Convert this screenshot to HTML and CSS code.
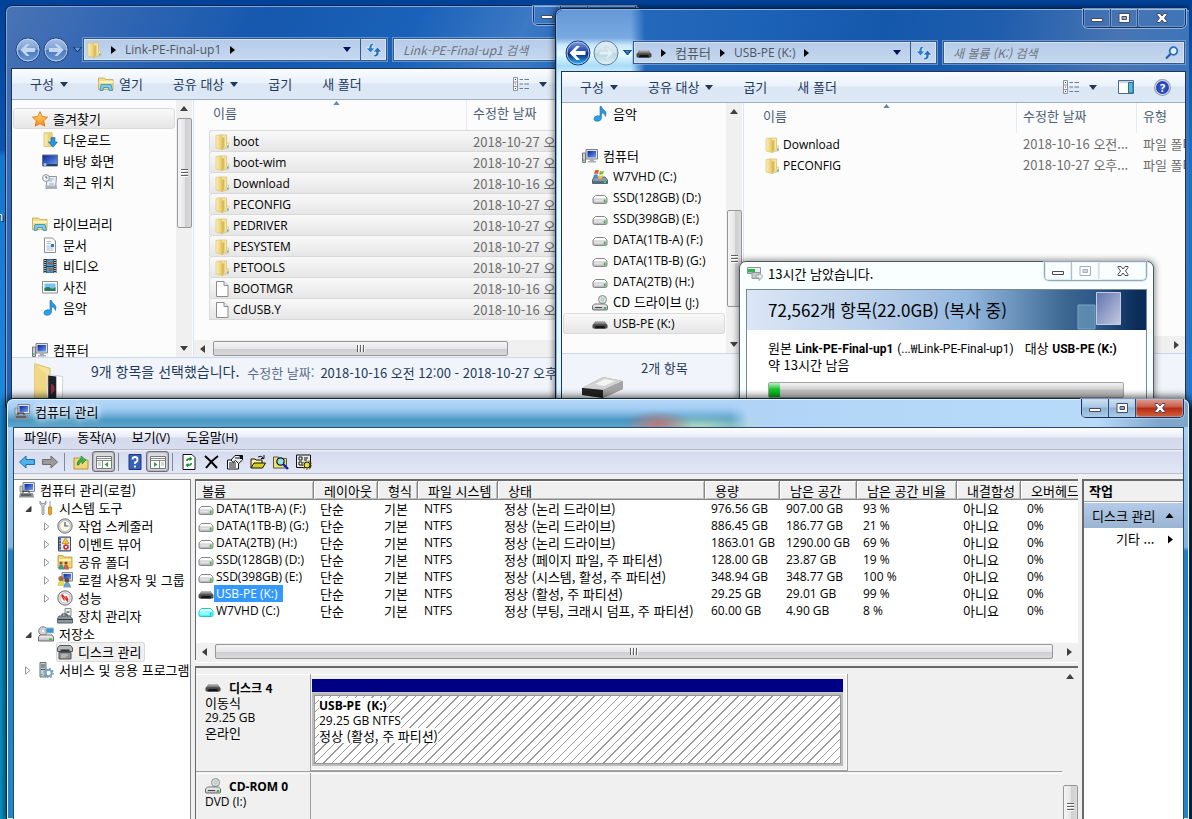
FILE: index.html
```html
<!DOCTYPE html>
<html lang="ko">
<head>
<meta charset="utf-8">
<title>컴퓨터 관리</title>
<link rel="stylesheet" href="styles.css">
</head>
<body>
<svg class="sprite" aria-hidden="true">
  <defs>
    <linearGradient id="gFolder" x1="0" x2="1"><stop offset="0" stop-color="#fbf1ba"/><stop offset="1" stop-color="#e6c766"/></linearGradient>
    <linearGradient id="gMetal" x1="0" y1="0" x2="0" y2="1"><stop offset="0" stop-color="#fafafa"/><stop offset="1" stop-color="#b4b4b8"/></linearGradient>
    <linearGradient id="gUsb" x1="0" y1="0" x2="0" y2="1"><stop offset="0" stop-color="#c4c4c4"/><stop offset="1" stop-color="#5c5c5c"/></linearGradient>
    <linearGradient id="gBlue" x1="0" y1="0" x2="1" y2="1"><stop offset="0" stop-color="#0b1f9a"/><stop offset="1" stop-color="#6ea4f2"/></linearGradient>
    <linearGradient id="gStar" x1="0" y1="0" x2="0" y2="1"><stop offset="0" stop-color="#ffe27a"/><stop offset="1" stop-color="#f58a12"/></linearGradient>
    <linearGradient id="gNote" x1="0" y1="0" x2="0" y2="1"><stop offset="0" stop-color="#2f8fe0"/><stop offset="1" stop-color="#23a7ea"/></linearGradient>
    <linearGradient id="gBall" x1="0" y1="0" x2="0" y2="1"><stop offset="0" stop-color="#7f9fe0"/><stop offset=".48" stop-color="#1f3f9f"/><stop offset=".52" stop-color="#0c2478"/><stop offset="1" stop-color="#28c0ff"/></linearGradient>
    <linearGradient id="gBallDim" x1="0" y1="0" x2="0" y2="1"><stop offset="0" stop-color="#a9c1e6"/><stop offset=".5" stop-color="#7b9fd3"/><stop offset=".52" stop-color="#4a79bf"/><stop offset="1" stop-color="#6d9bd6"/></linearGradient>
    <linearGradient id="gBallOff" x1="0" y1="0" x2="0" y2="1"><stop offset="0" stop-color="#dfeef5"/><stop offset=".5" stop-color="#d0e4ee"/><stop offset=".52" stop-color="#b8d5e4"/><stop offset="1" stop-color="#dcf1f4"/></linearGradient>
  </defs>
  <symbol id="folder" viewBox="0 0 16 16"><path d="M7 1h5.500v13L8 15.500z" fill="#f6e8a6" stroke="#d2b252" stroke-width=".6"/><path d="M8 4l2.500-1.500v11L8 15.500z" fill="#dcbb55"/><path d="M2 1.500 6.500.8 8 3v12.500L2 14z" fill="url(#gFolder)" stroke="#dcc168" stroke-width=".6"/><path d="M12.500 9H14.500v5H12z" fill="#f6f1cf" stroke="#c9b25a" stroke-width=".5"/><path d="M13 11.500h1.500v2H13z" fill="#4bb0e8"/></symbol>
  <symbol id="file" viewBox="0 0 16 16"><path d="M2.500.5h7.500l4 4v11H2.500z" fill="#fff" stroke="#8c8c8c"/><path d="M10 .5v4h4" fill="#eee" stroke="#8c8c8c"/></symbol>
  <symbol id="drive" viewBox="0 0 16 16"><path d="M3.500 5.500h9l2.500 2.500v4q0 1.500-1.500 1.500h-11Q1 13.500 1 12V8z" fill="url(#gMetal)" stroke="#85858a"/><path d="M3.500 6h9l2 2h-13z" fill="#fff"/><path d="M2.500 10h8v1.500h-8z" fill="#e4e4ea"/><path d="M12 9.500h1.500v3H12z" fill="#2fbf32"/></symbol>
  <symbol id="usb" viewBox="0 0 16 16"><path d="M4 5h8l3.500 4v2.500q0 1-1.500 1H2q-1.500 0-1.500-1V9z" fill="#4a4a4a"/><path d="M4 5h8l3 3.800Q8 7.500 1 8.800z" fill="url(#gUsb)"/><path d="M2.500 12.500 4 10h8l1.500 2.500z" fill="#141414"/></symbol>
  <symbol id="cd" viewBox="0 0 16 16"><circle cx="10.500" cy="4.500" r="4" fill="#dde8ee" stroke="#888"/><circle cx="10.500" cy="4.500" r="1.300" fill="#fff" stroke="#999"/><path d="M9 2l2 6M12.500 2l-2 5" stroke="#b9d7b5"/><path d="M2.500 9h11l2 2v3q0 1-1 1H1.500q-1 0-1-1v-3z" fill="url(#gMetal)" stroke="#6f6f72"/><path d="M3 12.500h7" stroke="#444"/><path d="M12 12h2v2h-2z" fill="#2fbf32"/></symbol>
  <symbol id="windrive" viewBox="0 0 16 16"><path d="M2 8h11l2.500 3v3.500H.5V11z" fill="#8b9aa8" stroke="#58646e"/><path d="M1 12h14v2.500H1z" fill="#54707f"/><path d="M12 12.500h2v1.500h-2z" fill="#4be05a"/><path d="M3 1.500q2-1.500 4 0L6 5Q4 3.800 2 5z" fill="#e8572b"/><path d="M8 2q2 1 4-.5L11 5q-2 1.300-4 .5z" fill="#7cbc3b"/><path d="M2 5.800Q4 4.500 6 5.800L5 9Q3 7.800 1 9z" fill="#3a8fe0"/><path d="M7 6.300q2 .9 4-.5L10 9.200q-2 1-4 .3z" fill="#f6c52e"/></symbol>
  <symbol id="star" viewBox="0 0 16 16"><path d="M8 .7l2.300 4.800 5.200.7-3.800 3.600 1 5.300L8 12.600l-4.700 2.500 1-5.300L.5 6.200l5.200-.7z" fill="url(#gStar)" stroke="#e0701c" stroke-width=".9"/></symbol>
  <symbol id="download" viewBox="0 0 16 16"><path d="M2 .8h8v13.500l-8 .2z" fill="url(#gFolder)" stroke="#c9a63e" stroke-width=".6"/><path d="M6 1.500h5v12H6z" fill="#ecd27a"/><path d="M9 5.500h4V10h2.500L11 15.300 6.500 10H9z" fill="#2797dd" stroke="#12609e" stroke-width=".6"/></symbol>
  <symbol id="desktop" viewBox="0 0 16 16"><path d="M.5 2h15v11H.5z" fill="url(#gBlue)" stroke="#68768a"/><path d="M1 11h14v2H1z" fill="#25415f"/><circle cx="3" cy="11.500" r="1.600" fill="#8fd0f2"/></symbol>
  <symbol id="recent" viewBox="0 0 16 16"><path d="M5 2.500h9.500l-1 12H4z" fill="#eef2f5" stroke="#8d959c"/><path d="M7 5h5M7 7h3M7 10h5" stroke="#83a9cc"/><path d="M5 11.500h10v3.500H5z" fill="#aab1b7"/><circle cx="4" cy="4" r="3.400" fill="#f5f8fa" stroke="#8a949c"/><path d="M4 2v2h1.500" stroke="#567" fill="none"/></symbol>
  <symbol id="library" viewBox="0 0 16 16"><path d="M.5 2h6l1 1.500H15V13.500H.5z" fill="#f2de8c" stroke="#c9a63e" stroke-width=".8"/><path d="M1 5h14v2H1z" fill="#fbf2c4"/><path d="M2 14.500 3 8.500h10l1.500 6h-3.500l-.5-3h-5l-.5 3z" fill="#7fcbe8" stroke="#2b8db5" stroke-width=".8"/></symbol>
  <symbol id="doc" viewBox="0 0 16 16"><path d="M2.500 1h8l3 3v11.500h-11z" fill="#fff" stroke="#8a8f96"/><path d="M4.500 4.500H9M4.500 6.500h4M4.500 9H9M4.500 11h7M4.500 13h7" stroke="#a7b7ca"/><path d="M9 7h3v3H9z" fill="#2d79c4"/></symbol>
  <symbol id="video" viewBox="0 0 16 16"><path d="M1.500 1h13v14h-13z" fill="#2b2b2b"/><path d="M4.500 1.500h7V8h-7zM4.500 8.700h7v6h-7z" fill="#3f9fd2"/><path d="M5 2l3 3 3-2-1 4-4-1zM6 10l5 1-3 3z" fill="#b5532e"/><path d="M3 2v13M13 2v13" stroke="#fff" stroke-width="1.300" stroke-dasharray="1 1"/></symbol>
  <symbol id="photo" viewBox="0 0 16 16"><path d="M.5 2.500h15v11.500H.5z" fill="#fff" stroke="#8c8c8c"/><path d="M2.500 4.500h11V12h-11z" fill="#7ac3ea"/><path d="M2.500 9q4-2 6 0t5-1v4h-11z" fill="#2b7a5e"/></symbol>
  <symbol id="music" viewBox="0 0 16 16"><path d="M8 .5h1.500q.5 2.500 3 4t1 6q-.3-3-4-3.700V12q-.3 3-4 3.300-3.500 0-3.700-2.300.2-3 4-3.300l2.200.3z" fill="url(#gNote)" stroke="#1b6fae" stroke-width=".6"/></symbol>
  <symbol id="computer" viewBox="0 0 16 16"><path d="M.5 5h3v9.500h-3z" fill="#c9ced4" stroke="#777"/><path d="M1 11.500h1.500v1.500H1z" fill="#3bc14a"/><path d="M4 1.500h11.500v9.500H4z" fill="#dfe2e6" stroke="#7d8188"/><path d="M5.500 3h8.500v6.500H5.500z" fill="url(#gBlue)"/><path d="M8 11h4v2h2v1.500H6V13h2z" fill="#a9aeb5"/></symbol>
  <symbol id="manage" viewBox="0 0 16 16"><path d="M4 .5h11.500v9H4z" fill="#dfe2e6" stroke="#7d8188"/><path d="M5.500 2h8.500v6H5.500z" fill="url(#gBlue)"/><path d="M1 4h2.500v6H1z" fill="#c9ced4" stroke="#777" stroke-width=".7"/><path d="M1 11h13l1 4.500H0z" fill="#8b9097"/><path d="M4 11V9h6v2M2 13h10" stroke="#333" fill="none"/></symbol>
  <symbol id="copy" viewBox="0 0 16 16"><path d="M.5 1.500h13v6H.5z" fill="#e9eef0" stroke="#8c969a"/><path d="M1 3h7v3.500H1z" fill="#2fb34c"/><path d="M5 6.500h8v6H5z" fill="#c7ced2" stroke="#8c969a"/><path d="M9 9h3V6.500l4 4-4 4V12H9z" fill="#e6e8e9" stroke="#9a9fa3"/></symbol>
  <symbol id="tools" viewBox="0 0 16 16"><path d="M2 1v3l2 1.500V14q1 2 2 0V5.500L8 4V1L6.500 3.500h-3z" fill="#d5dade" stroke="#6d757c" stroke-width=".7"/><path d="M11.500 1h1v6h-1z" fill="#8d959c"/><path d="M10.500 7h3v7q-1.500 2.500-3 0z" fill="#f2a71b" stroke="#b5730a" stroke-width=".7"/></symbol>
  <symbol id="clock" viewBox="0 0 16 16"><circle cx="8" cy="8" r="7.200" fill="#cfd4d9" stroke="#6f767d"/><circle cx="8" cy="8" r="5.400" fill="#fffbe8" stroke="#aaa" stroke-width=".6"/><path d="M8 4v4h3.500" stroke="#39557d" stroke-width="1.200" fill="none"/></symbol>
  <symbol id="event" viewBox="0 0 16 16"><path d="M1.500 1h12v14h-12z" fill="#8aa3c4" stroke="#3f4f68"/><path d="M4 2h9v12H4z" fill="#dfe8f4"/><path d="M1 3h3M1 6h3M1 9h3M1 12h3" stroke="#333"/><path d="M8.500 2l3.500 5.500H5z" fill="#f6c52e" stroke="#a8830b" stroke-width=".6"/><circle cx="9" cy="11" r="2.800" fill="#d42f26"/><path d="M8 10l2 2M10 10l-2 2" stroke="#fff"/></symbol>
  <symbol id="share" viewBox="0 0 16 16"><path d="M1 1.500h5l1 1.500h8v11H1z" fill="#efd373" stroke="#b9942f" stroke-width=".8"/><path d="M2 5h12v2H2z" fill="#fbf0be"/><circle cx="4" cy="9" r="1.600" fill="#8a5a3a"/><path d="M1.500 15.500q0-5 2.500-5t3 5z" fill="#3f9a86"/><circle cx="9" cy="9" r="1.600" fill="#7a4a30"/><path d="M6.500 15.500q0-5 2.500-5t3 5z" fill="#c9604a"/></symbol>
  <symbol id="users" viewBox="0 0 16 16"><path d="M5 .5h10.500v8.500H5z" fill="#dfe2e6" stroke="#7d8188"/><path d="M6.500 2H14v5.500H6.500z" fill="url(#gBlue)"/><circle cx="4" cy="6.500" r="2.600" fill="#a86a3c"/><path d="M.5 14q0-5 3.500-5t4 5z" fill="#d9dd5a"/><circle cx="10" cy="8.500" r="2.400" fill="#6a4a34"/><path d="M6.500 15.500q0-5 3.500-5t4 5z" fill="#6f9fd0"/></symbol>
  <symbol id="perf" viewBox="0 0 16 16"><circle cx="8" cy="8" r="7.200" fill="#e5e5e5" stroke="#6b6b6b"/><circle cx="8" cy="8" r="5" fill="#fff" stroke="#999" stroke-width=".6"/><path d="M4.500 5.500l3 5M5 4.500l6 7M9 6l2 4" stroke="#d22" stroke-width="1.300"/></symbol>
  <symbol id="device" viewBox="0 0 16 16"><path d="M8 .5h6V8H8z" fill="#eceef0" stroke="#868c92"/><path d="M9.500 3h3v2h-3z" fill="#6da55c"/><path d="M2 8h11l2.500 3v4H.5v-4z" fill="#8d979f" stroke="#596169"/><path d="M1 11.500h14M5 8V6h5v2" stroke="#31383e" fill="none"/></symbol>
  <symbol id="storage" viewBox="0 0 16 16"><circle cx="5" cy="5" r="4.300" fill="#cfd3d6" stroke="#80868b"/><circle cx="5" cy="5" r="1.200" fill="#fff"/><path d="M8 2h7.500v5H8z" fill="#2e9bd8" stroke="#a9b5be"/><path d="M2 9h12l1.500 2v4H.5v-4z" fill="url(#gMetal)" stroke="#6f6f72"/><path d="M11 12.500h3v1.500h-3z" fill="#2fbf32"/></symbol>
  <symbol id="diskmgr" viewBox="0 0 16 16"><path d="M2.500 1.500h11l2 2.500v3.500H.5V4z" fill="#b5b9bc" stroke="#555"/><path d="M3.500 5.500h9v2h-9z" fill="#333"/><path d="M2 8.500h12v6.500H2z" fill="#8f9498" stroke="#555"/><path d="M4 11h7M4 13h5" stroke="#d5d5d5"/></symbol>
  <symbol id="services" viewBox="0 0 16 16"><path d="M2 .5h6v14.500H2z" fill="#c6d0d4" stroke="#6a7479"/><path d="M3 3h4M3 5h4M3 7.500h4" stroke="#48525a"/><path d="M3 12h1.500v1.500H3z" fill="#3bc14a"/><circle cx="10.500" cy="11" r="3.200" fill="none" stroke="#7a9fc4" stroke-width="2"/><circle cx="10.500" cy="11" r="4.600" fill="none" stroke="#7a9fc4" stroke-width="1.400" stroke-dasharray="1.800 1.800"/></symbol>
  <symbol id="refresh" viewBox="0 0 18 16"><path d="M8 1Q4 1 4 5v1H1l4.500 5L10 6H7V5q0-2 2-2.500z" fill="#2a7fd0" stroke="#f1f7fd" stroke-width=".7"/><path d="M9 15q5 0 5-4v-1h3l-4.500-5L8 10h3v1q0 2-3 2z" fill="#2a6fc0" stroke="#f1f7fd" stroke-width=".7"/></symbol>
  <symbol id="view" viewBox="0 0 16 14"><path d="M.5.5h4v13h-4zM.5 5h4M.5 9.500h4" fill="#fff" stroke="#8a93a3"/><path d="M2 2.500h1M2 11.500h1" stroke="#444"/><path d="M2 7h1" stroke="#d22"/><path d="M6.500 2.500H10m1.500 0H16M6.500 7H10m1.500 0H16M6.500 11.500H10m1.500 0H16" stroke="#6c7a90"/></symbol>
  <symbol id="preview" viewBox="0 0 16 14"><path d="M.5.5h15v13H.5z" fill="#fff" stroke="#4c6a8c"/><path d="M1 1h14v2H1z" fill="#c9d6e6"/><path d="M10.500 2.500h4.500V13h-4.500z" fill="#59b7d8" stroke="#2b6e93"/></symbol>
  <symbol id="winmin" viewBox="0 0 14 12"><path d="M1.500 6.500h11v3h-11z" fill="#fff" stroke="#4a4a5c"/></symbol>
  <symbol id="winmax" viewBox="0 0 14 12"><path d="M2 1.500h10.500v9H2z" fill="#fff" stroke="#4a4a5c"/><path d="M5 4.500h4.500v3H5z" fill="#8fb0d6" stroke="#4a4a5c"/></symbol>
  <symbol id="winclose" viewBox="0 0 14 12"><path d="M2 1.500h3L7 4l2-2.500h3v1L9.500 6l2.500 3.500v1H9L7 8l-2 2.500H2v-1L4.500 6 2 2.500z" fill="#fff" stroke="#4a4a5c"/></symbol>
  <symbol id="tri-d" viewBox="0 0 8 5"><path d="M0 0h8L4 5z" fill="currentColor"/></symbol>
  <symbol id="tri-u" viewBox="0 0 8 5"><path d="M0 5h8L4 0z" fill="currentColor"/></symbol>
  <symbol id="tri-r" viewBox="0 0 5 8"><path d="M0 0v8l5-4z" fill="currentColor"/></symbol>
  <symbol id="tri-l" viewBox="0 0 5 8"><path d="M5 0v8L0 4z" fill="currentColor"/></symbol>
  <symbol id="open-node" viewBox="0 0 8 8"><path d="M7 2v5H2z" fill="#404040" stroke="#222" stroke-width=".8"/></symbol>
  <symbol id="shut-node" viewBox="0 0 6 9"><path d="M.5.8v7.400l4.500-3.700z" fill="#fff" stroke="#989898"/></symbol>
</svg>

<main class="desk">
  <span class="desk-label">n</span>

  <section class="win win-a" aria-label="Link-PE-Final-up1">
    <header class="caption">
      <div class="caps"><button aria-label="최소화"><svg><use href="#winmin"/></svg></button><button aria-label="최대화"><svg><use href="#winmax"/></svg></button><button class="close" aria-label="닫기"><svg><use href="#winclose"/></svg></button></div>
    </header>
    <div class="navrow">
      <div class="travel">
        <button aria-label="뒤로"><svg viewBox="0 0 26 26"><circle cx="13" cy="13" r="12" fill="url(#gBallDim)" stroke="#1c3d75"/><circle cx="13" cy="13" r="11" fill="none" stroke="#bcd2ef"/><path d="M5.500 13l6-6h3l-3.500 4h9v4h-9l3.500 4h-3z" fill="#c3d7f1"/></svg></button>
        <button aria-label="앞으로"><svg viewBox="0 0 26 26"><circle cx="13" cy="13" r="12" fill="url(#gBallDim)" stroke="#1c3d75"/><circle cx="13" cy="13" r="11" fill="none" stroke="#bcd2ef"/><path d="M20.500 13l-6-6h-3l3.500 4H6v4h9l-3.500 4h3z" fill="#c3d7f1"/></svg></button>
        <button class="recent-btn dim" aria-label="최근 위치"><svg><use href="#tri-d"/></svg></button>
      </div>
      <div class="address">
        <svg class="i16"><use href="#folder"/></svg>
        <svg class="tr"><use href="#tri-r"/></svg>
        <span class="en">Link-PE-Final-up1</span>
        <svg class="tr"><use href="#tri-r"/></svg>
        <button class="drop" aria-label="이전 위치"><svg><use href="#tri-d"/></svg></button>
        <button class="refresh" aria-label="새로 고침"><svg><use href="#refresh"/></svg></button>
      </div>
      <label class="search"><input type="text" placeholder="Link-PE-Final-up1 검색" aria-label="검색"></label>
    </div>
    <div class="client">
      <div class="cmdbar">
        <button>구성 <svg class="td"><use href="#tri-d"/></svg></button>
        <button class="with-icon"><svg class="i16"><use href="#library"/></svg>열기</button>
        <button>공유 대상 <svg class="td"><use href="#tri-d"/></svg></button>
        <button>굽기</button>
        <button>새 폴더</button>
        <span class="right"><button aria-label="보기"><svg class="vw"><use href="#view"/></svg><svg class="td"><use href="#tri-d"/></svg></button><button aria-label="미리 보기 창"><svg class="vw"><use href="#preview"/></svg></button><button class="help" aria-label="도움말"></button></span>
      </div>
      <div class="panes">
        <nav class="side">
          <ul>
            <li class="on"><a href="#"><svg class="i16"><use href="#star"/></svg>즐겨찾기</a></li>
            <li class="sub"><a href="#"><svg class="i16"><use href="#download"/></svg>다운로드</a></li>
            <li class="sub"><a href="#"><svg class="i16"><use href="#desktop"/></svg>바탕 화면</a></li>
            <li class="sub"><a href="#"><svg class="i16"><use href="#recent"/></svg>최근 위치</a></li>
          </ul>
          <ul>
            <li><a href="#"><svg class="i16"><use href="#library"/></svg>라이브러리</a></li>
            <li class="sub"><a href="#"><svg class="i16"><use href="#doc"/></svg>문서</a></li>
            <li class="sub"><a href="#"><svg class="i16"><use href="#video"/></svg>비디오</a></li>
            <li class="sub"><a href="#"><svg class="i16"><use href="#photo"/></svg>사진</a></li>
            <li class="sub"><a href="#"><svg class="i16"><use href="#music"/></svg>음악</a></li>
          </ul>
          <ul>
            <li><a href="#"><svg class="i16"><use href="#computer"/></svg>컴퓨터</a></li>
          </ul>
        </nav>
        <div class="vscroll t-a"><svg class="au"><use href="#tri-u"/></svg><i></i><svg class="au"><use href="#tri-d"/></svg></div>
        <div class="files">
          <div class="files-view">
          <table>
            <colgroup><col class="c-name"><col class="c-date"></colgroup>
            <thead><tr><th>이름<svg class="sort"><use href="#tri-u"/></svg></th><th>수정한 날짜</th></tr></thead>
            <tbody class="picked">
              <tr><td><svg class="i16"><use href="#folder"/></svg><span class="en">boot</span></td><td>2018-10-27 오후</td></tr>
              <tr><td><svg class="i16"><use href="#folder"/></svg><span class="en">boot-wim</span></td><td>2018-10-27 오후</td></tr>
              <tr><td><svg class="i16"><use href="#folder"/></svg><span class="en">Download</span></td><td>2018-10-16 오전</td></tr>
              <tr><td><svg class="i16"><use href="#folder"/></svg><span class="en">PECONFIG</span></td><td>2018-10-27 오후</td></tr>
              <tr><td><svg class="i16"><use href="#folder"/></svg><span class="en">PEDRIVER</span></td><td>2018-10-27 오후</td></tr>
              <tr><td><svg class="i16"><use href="#folder"/></svg><span class="en">PESYSTEM</span></td><td>2018-10-27 오후</td></tr>
              <tr><td><svg class="i16"><use href="#folder"/></svg><span class="en">PETOOLS</span></td><td>2018-10-27 오후</td></tr>
              <tr><td><svg class="i16"><use href="#file"/></svg><span class="en">BOOTMGR</span></td><td>2018-10-16 오전</td></tr>
              <tr><td><svg class="i16"><use href="#file"/></svg><span class="en">CdUSB.Y</span></td><td>2018-10-16 오전</td></tr>
            </tbody>
          </table>
          </div>
          <div class="hscroll h-a"><svg class="al"><use href="#tri-l"/></svg><i></i><svg class="al"><use href="#tri-r"/></svg></div>
        </div>
      </div>
      <footer class="details">
        <svg class="big" viewBox="0 0 40 40"><path d="M3 2l17 5v33H3z" fill="#f5e29a" stroke="#d6b95e"/><path d="M18 14l16 2v24H16z" fill="#fff" stroke="#ccc"/><path d="M18 15l9 1v24h-9z" fill="#20202a"/><path d="M21 24q5 2 4 8l-4 4z" fill="#8b2b3c"/><path d="M3 2l13 12v26L3 36z" fill="#efd786"/></svg>
        <span class="count">9개 항목을 선택했습니다.</span><span class="lab">수정한 날짜:</span><span>2018-10-16 오전 12:00 - 2018-10-27 오후</span>
      </footer>
    </div>
  </section>

  <section class="win win-b" aria-label="USB-PE (K:)">
    <div class="haze"></div>
    <header class="caption">
      <div class="caps"><button aria-label="최소화"><svg><use href="#winmin"/></svg></button><button aria-label="최대화"><svg><use href="#winmax"/></svg></button><button class="close" aria-label="닫기"><svg><use href="#winclose"/></svg></button></div>
    </header>
    <div class="navrow">
      <div class="travel">
        <button aria-label="뒤로"><svg viewBox="0 0 26 26"><circle cx="13" cy="13" r="12" fill="url(#gBall)" stroke="#12306a"/><circle cx="13" cy="13" r="11" fill="none" stroke="#a8c6ee"/><path d="M4.500 13l7-7h3.500l-4.500 5h10v4h-10l4.500 5h-3.500z" fill="#fff"/></svg></button>
        <button aria-label="앞으로"><svg viewBox="0 0 26 26"><circle cx="13" cy="13" r="12" fill="url(#gBallOff)" stroke="#66809a"/><path d="M20.500 13l-6-6h-3l3.500 4H6v4h9l-3.500 4h3z" fill="#e3f0f4" stroke="#c4dae4"/></svg></button>
        <button class="recent-btn" aria-label="최근 위치"><svg><use href="#tri-d"/></svg></button>
      </div>
      <div class="address">
        <svg class="i16"><use href="#usb"/></svg>
        <svg class="tr"><use href="#tri-r"/></svg>
        <span>컴퓨터</span>
        <svg class="tr"><use href="#tri-r"/></svg>
        <span class="en">USB-PE (K:)</span>
        <svg class="tr"><use href="#tri-r"/></svg>
        <button class="drop" aria-label="이전 위치"><svg><use href="#tri-d"/></svg></button>
        <button class="refresh" aria-label="새로 고침"><svg><use href="#refresh"/></svg></button>
      </div>
      <label class="search"><input type="text" placeholder="새 볼륨 (K:) 검색" aria-label="검색"><svg class="lens" viewBox="0 0 14 14"><circle cx="8.500" cy="5" r="3.800" fill="#e4f1fb" stroke="#2a6fba" stroke-width="1.800"/><path d="M5.500 8l-4.500 4.500" stroke="#1f5aa8" stroke-width="2.200"/></svg></label>
    </div>
    <div class="client">
      <div class="cmdbar">
        <button>구성 <svg class="td"><use href="#tri-d"/></svg></button>
        <button>공유 대상 <svg class="td"><use href="#tri-d"/></svg></button>
        <button>굽기</button>
        <button>새 폴더</button>
        <span class="right"><button aria-label="보기"><svg class="vw"><use href="#view"/></svg><svg class="td"><use href="#tri-d"/></svg></button><button aria-label="미리 보기 창"><svg class="vw"><use href="#preview"/></svg></button><button class="help" aria-label="도움말">?</button></span>
      </div>
      <div class="panes">
        <nav class="side scrolled">
          <ul>
            <li class="sub"><a href="#"><svg class="i16"><use href="#music"/></svg>음악</a></li>
          </ul>
          <ul>
            <li><a href="#"><svg class="i16"><use href="#computer"/></svg>컴퓨터</a></li>
            <li class="sub"><a href="#"><svg class="i16"><use href="#windrive"/></svg><span class="en">W7VHD (C:)</span></a></li>
            <li class="sub"><a href="#"><svg class="i16"><use href="#drive"/></svg><span class="en">SSD(128GB) (D:)</span></a></li>
            <li class="sub"><a href="#"><svg class="i16"><use href="#drive"/></svg><span class="en">SSD(398GB) (E:)</span></a></li>
            <li class="sub"><a href="#"><svg class="i16"><use href="#drive"/></svg><span class="en">DATA(1TB-A) (F:)</span></a></li>
            <li class="sub"><a href="#"><svg class="i16"><use href="#drive"/></svg><span class="en">DATA(1TB-B) (G:)</span></a></li>
            <li class="sub"><a href="#"><svg class="i16"><use href="#drive"/></svg><span class="en">DATA(2TB) (H:)</span></a></li>
            <li class="sub"><a href="#"><svg class="i16"><use href="#cd"/></svg><span>CD 드라이브 <span class="en">(J:)</span></span></a></li>
            <li class="sub on"><a href="#"><svg class="i16"><use href="#usb"/></svg><span class="en">USB-PE (K:)</span></a></li>
          </ul>
        </nav>
        <div class="vscroll t-b"><svg class="au"><use href="#tri-u"/></svg><i></i><svg class="au"><use href="#tri-d"/></svg></div>
        <div class="files">
          <div class="files-view">
          <table class="wide">
            <colgroup><col class="c-name"><col class="c-date"><col class="c-type"></colgroup>
            <thead><tr><th>이름<svg class="sort"><use href="#tri-u"/></svg></th><th>수정한 날짜</th><th>유형</th></tr></thead>
            <tbody>
              <tr><td><svg class="i16"><use href="#folder"/></svg><span class="en">Download</span></td><td>2018-10-16 오전...</td><td>파일 폴더</td></tr>
              <tr><td><svg class="i16"><use href="#folder"/></svg><span class="en">PECONFIG</span></td><td>2018-10-27 오후...</td><td>파일 폴더</td></tr>
            </tbody>
          </table>
          </div>
          <div class="hscroll h-b"><svg class="al"><use href="#tri-l"/></svg><i></i><svg class="al"><use href="#tri-r"/></svg></div>
        </div>
      </div>
      <footer class="details items">
        <svg class="usbbig" viewBox="0 0 44 26"><path d="M1 12 22 1l20 4v8L22 22 1 19z" fill="#8d8d8d"/><path d="M1 12 22 1l20 4-20 9z" fill="#d2d2d2"/><path d="M1 12l21 2v8L1 19z" fill="#222"/><path d="M22 14 42 5v8L22 22z" fill="#a5a5a5"/><path d="M14 8l10-5 10 2-11 5z" fill="#f4f4f4"/></svg>
        <span class="count">2개 항목</span>
      </footer>
    </div>
  </section>

  <section class="dialog" role="dialog" aria-label="13시간 남았습니다.">
    <header>
      <svg class="i16"><use href="#copy"/></svg><h2>13시간 남았습니다.</h2>
      <div class="caps pale"><button aria-label="최소화"><svg><use href="#winmin"/></svg></button><button class="off" disabled aria-label="최대화"><svg><use href="#winmax"/></svg></button><button class="close" aria-label="닫기"><svg><use href="#winclose"/></svg></button></div>
    </header>
    <div class="dialog-body">
      <div class="banner"><span>72,562개 항목(22.0GB) (복사 중)</span>
        <svg viewBox="0 0 80 40"><defs><linearGradient id="pane" x1="0" y1="0" x2="1" y2="1"><stop offset="0" stop-color="#5f75ae"/><stop offset="1" stop-color="#c5c9e2"/></linearGradient></defs><path d="M12 15h17v24H12z" fill="#6d9dbd" stroke="#9cc3d8" opacity=".7"/><path d="M30.500 2.500h24v32h-24z" fill="url(#pane)" stroke="#c3cbe6"/></svg>
      </div>
      <div class="info">
        <p>원본 <b>Link-PE-Final-up1</b> <span class="rb">(...</span><span class="won">₩</span><span class="rb">Link-PE-Final-up1)</span> &nbsp;&nbsp;대상 <b>USB-PE (K:)</b></p>
        <p>약 13시간 남음</p>
        <div class="bar" role="progressbar" aria-valuenow="3"><i style="width:3%"></i></div>
      </div>
    </div>
  </section>

  <section class="mgmt" aria-label="컴퓨터 관리">
    <div class="reflect"></div>
    <header>
      <svg class="i16"><use href="#manage"/></svg><h1>컴퓨터 관리</h1>
      <div class="caps glass"><button aria-label="최소화"><svg><use href="#winmin"/></svg></button><button aria-label="최대화"><svg><use href="#winmax"/></svg></button><button class="close red" aria-label="닫기"><svg><use href="#winclose"/></svg></button></div>
    </header>
    <div class="mclient">
      <div class="menubar"><button>파일<span class="en">(F)</span></button><button>동작<span class="en">(A)</span></button><button>보기<span class="en">(V)</span></button><button>도움말<span class="en">(H)</span></button></div>
      <div class="tools">
        <button aria-label="뒤로"><svg viewBox="0 0 16 16"><path d="M.5 8 7 2v3.500h8.500v5H7V14z" fill="#4fb2e8" stroke="#1d6fb0"/></svg></button>
        <button aria-label="앞으로"><svg viewBox="0 0 16 16"><path d="M15.500 8 9 2v3.500H.5v5H9V14z" fill="#9b9b9b" stroke="#6d6d6d"/></svg></button>
        <i class="sep"></i>
        <button aria-label="위로"><svg viewBox="0 0 16 16"><path d="M1 4h6l1 2h7v9H1z" fill="#f0d67f" stroke="#b9942f"/><path d="M4 11q0-5 4-6V2l5 4-4 4V7.500Q6 8 6 11z" fill="#39b54a" stroke="#1f7a2c" stroke-width=".6"/></svg></button>
        <button class="down" aria-label="콘솔 트리"><svg viewBox="0 0 16 16"><path d="M.5 2.500h15v12H.5z" fill="#fff" stroke="#777"/><path d="M1 4.500h14M1 6.500h14M6.500 7v7" stroke="#888"/><path d="M2 9h3M2 11h3" stroke="#aaa"/><path d="M12 8v5L8.500 10.500z" fill="#2ba33a"/></svg></button>
        <i class="sep"></i>
        <button aria-label="도움말"><svg viewBox="0 0 16 16"><path d="M2 .5h12v15H2z" fill="#3760b8" stroke="#1b3a86"/><path d="M5.500 5.500q0-2.500 2.500-2.500t2.500 2.500T8 8.500V10M8 11.500v2" fill="none" stroke="#fff" stroke-width="1.800"/></svg></button>
        <button class="down" aria-label="작업 창"><svg viewBox="0 0 16 16"><path d="M.5 2.500h15v12H.5z" fill="#fff" stroke="#777"/><path d="M1 4.500h14M1 6.500h14M9.500 7v7" stroke="#888"/><path d="M11 9h3M11 11h3" stroke="#aaa"/><path d="M4 8v5l3.500-2.500z" fill="#2ba33a"/></svg></button>
        <i class="sep"></i>
        <button aria-label="새로 고침"><svg viewBox="0 0 16 16"><path d="M2 .5h9l3 3v12H2z" fill="#fff" stroke="#111"/><path d="M5 7q0-3 4-3l-.5-1.800L11.500 5 8.500 7V5.500Q6.500 5.500 6.500 7zM11 9q0 3-4 3l.5 1.800L4.500 11l3-2v1.500q2 0 2-1.500z" fill="#118a22"/></svg></button>
        <button aria-label="삭제"><svg viewBox="0 0 16 16"><path d="M1 2q6 5 12 12M14 2Q7 7 2 14" fill="none" stroke="#000" stroke-width="2"/></svg></button>
        <button aria-label="속성"><svg viewBox="0 0 16 16"><path d="M.5 6h11v9H.5z" fill="#fff" stroke="#111"/><path d="M2 9h7M2 11h7M2 13h7" stroke="#111"/><path d="M4 6l4-4.500h7.500V6l-4 3.500L8.500 6.500 6 8.500z" fill="#eee" stroke="#111"/><path d="M8 4h4" stroke="#111"/><path d="M12.500 1.500h3V5h-3z" fill="#111"/></svg></button>
        <button aria-label="열기"><svg viewBox="0 0 16 16"><path d="M1 14V5h4l1 1h6v3" fill="#ffef9a" stroke="#111"/><path d="M1 14 4 9h11.500l-3 5z" fill="#d8cf1c" stroke="#111"/><path d="M8 3q3-2 5.500 1M14 1v3.500h-3" fill="none" stroke="#111"/></svg></button>
        <button aria-label="찾기"><svg viewBox="0 0 16 16"><path d="M.5 3h5l1 1.500h7V14H.5z" fill="#f4e36a" stroke="#555"/><circle cx="7.500" cy="7.500" r="3.700" fill="#8fe3ee" stroke="#111" stroke-width="1.200"/><path d="M10 10l5 5" stroke="#1020b0" stroke-width="2.400"/></svg></button>
        <button aria-label="설정"><svg viewBox="0 0 16 16"><path d="M.5 1h14v12.500H.5z" fill="#e9e9e9" stroke="#111"/><path d="M3 3h3v3H3zM3 8h3v3H3z" fill="#fff" stroke="#111"/><path d="M8 4h4M8 6h3" stroke="#111"/><circle cx="11" cy="11" r="3" fill="#e8e02a" stroke="#111"/><circle cx="11" cy="11" r="4.300" fill="none" stroke="#8a8410" stroke-width="1.400" stroke-dasharray="1.500 1.500"/></svg></button>
      </div>
      <div class="body">
        <nav class="tree">
          <ul>
            <li class="root"><svg class="i16"><use href="#manage"/></svg><a href="#">컴퓨터 관리(로컬)</a></li>
            <li class="l1"><svg class="tg"><use href="#open-node"/></svg><svg class="i16"><use href="#tools"/></svg><a href="#">시스템 도구</a></li>
            <li class="l2"><svg class="tg"><use href="#shut-node"/></svg><svg class="i16"><use href="#clock"/></svg><a href="#">작업 스케줄러</a></li>
            <li class="l2"><svg class="tg"><use href="#shut-node"/></svg><svg class="i16"><use href="#event"/></svg><a href="#">이벤트 뷰어</a></li>
            <li class="l2"><svg class="tg"><use href="#shut-node"/></svg><svg class="i16"><use href="#share"/></svg><a href="#">공유 폴더</a></li>
            <li class="l2"><svg class="tg"><use href="#shut-node"/></svg><svg class="i16"><use href="#users"/></svg><a href="#">로컬 사용자 및 그룹</a></li>
            <li class="l2"><svg class="tg"><use href="#shut-node"/></svg><svg class="i16"><use href="#perf"/></svg><a href="#">성능</a></li>
            <li class="l2"><svg class="tg"></svg><svg class="i16"><use href="#device"/></svg><a href="#">장치 관리자</a></li>
            <li class="l1"><svg class="tg"><use href="#open-node"/></svg><svg class="i16"><use href="#storage"/></svg><a href="#">저장소</a></li>
            <li class="l2"><svg class="tg"></svg><span class="cur"><svg class="i16"><use href="#diskmgr"/></svg><a href="#">디스크 관리</a></span></li>
            <li class="l1"><svg class="tg"><use href="#shut-node"/></svg><svg class="i16"><use href="#services"/></svg><a href="#">서비스 및 응용 프로그램</a></li>
          </ul>
        </nav>
        <div class="center">
          <div class="volumes">
            <table>
              <colgroup><col class="v1"><col class="v2"><col class="v3"><col class="v4"><col class="v5"><col class="v6"><col class="v7"><col class="v8"><col class="v9"><col class="v10"></colgroup>
              <thead><tr><th>볼륨</th><th>레이아웃</th><th>형식</th><th>파일 시스템</th><th>상태</th><th>용량</th><th>남은 공간</th><th>남은 공간 비율</th><th>내결함성</th><th>오버헤드</th></tr></thead>
              <tbody>
                <tr><td><svg class="i16"><use href="#drive"/></svg><span>DATA(1TB-A) (F:)</span></td><td>단순</td><td>기본</td><td class="en">NTFS</td><td>정상 (논리 드라이브)</td><td class="en">976.56 GB</td><td class="en">907.00 GB</td><td class="en">93 %</td><td>아니요</td><td class="en">0%</td></tr>
                <tr><td><svg class="i16"><use href="#drive"/></svg><span>DATA(1TB-B) (G:)</span></td><td>단순</td><td>기본</td><td class="en">NTFS</td><td>정상 (논리 드라이브)</td><td class="en">886.45 GB</td><td class="en">186.77 GB</td><td class="en">21 %</td><td>아니요</td><td class="en">0%</td></tr>
                <tr><td><svg class="i16"><use href="#drive"/></svg><span>DATA(2TB) (H:)</span></td><td>단순</td><td>기본</td><td class="en">NTFS</td><td>정상 (논리 드라이브)</td><td class="en">1863.01 GB</td><td class="en">1290.00 GB</td><td class="en">69 %</td><td>아니요</td><td class="en">0%</td></tr>
                <tr><td><svg class="i16"><use href="#drive"/></svg><span>SSD(128GB) (D:)</span></td><td>단순</td><td>기본</td><td class="en">NTFS</td><td>정상 (페이지 파일, 주 파티션)</td><td class="en">128.00 GB</td><td class="en">23.87 GB</td><td class="en">19 %</td><td>아니요</td><td class="en">0%</td></tr>
                <tr><td><svg class="i16"><use href="#drive"/></svg><span>SSD(398GB) (E:)</span></td><td>단순</td><td>기본</td><td class="en">NTFS</td><td>정상 (시스템, 활성, 주 파티션)</td><td class="en">348.94 GB</td><td class="en">348.77 GB</td><td class="en">100 %</td><td>아니요</td><td class="en">0%</td></tr>
                <tr class="sel"><td><svg class="i16"><use href="#usb"/></svg><span>USB-PE (K:)</span></td><td>단순</td><td>기본</td><td class="en">NTFS</td><td>정상 (활성, 주 파티션)</td><td class="en">29.25 GB</td><td class="en">29.01 GB</td><td class="en">99 %</td><td>아니요</td><td class="en">0%</td></tr>
                <tr><td><svg class="i16 teal"><use href="#drive"/></svg><span>W7VHD (C:)</span></td><td>단순</td><td>기본</td><td class="en">NTFS</td><td>정상 (부팅, 크래시 덤프, 주 파티션)</td><td class="en">60.00 GB</td><td class="en">4.90 GB</td><td class="en">8 %</td><td>아니요</td><td class="en">0%</td></tr>
              </tbody>
            </table>
            <div class="hscroll h-m"><svg class="al"><use href="#tri-l"/></svg><i></i><svg class="al"><use href="#tri-r"/></svg></div>
          </div>
          <div class="split"></div>
          <div class="disks">
            <div class="disk-list">
              <div class="disk">
                <div class="disk-head"><h3><svg class="i16"><use href="#usb"/></svg>디스크 4</h3><p>이동식</p><p class="en">29.25 GB</p><p>온라인</p></div>
                <div class="parts"><div class="part-box"><div class="stripe"></div><div class="part"><p class="en"><b>USB-PE &nbsp;(K:)</b></p><p class="en">29.25 GB NTFS</p><p>정상 (활성, 주 파티션)</p></div></div></div>
              </div>
              <div class="disk last">
                <div class="disk-head"><h3 class="en"><svg class="i16"><use href="#cd"/></svg>CD-ROM 0</h3><p class="en">DVD (I:)</p></div>
                <div class="parts"></div>
              </div>
            </div>
            <div class="vscroll t-m"><svg class="au"><use href="#tri-u"/></svg><i></i></div>
          </div>
        </div>
        <aside class="actions">
          <h2>작업</h2>
          <button class="group">디스크 관리<svg class="up"><use href="#tri-u"/></svg></button>
          <button class="more">기타 ...<svg class="rt"><use href="#tri-r"/></svg></button>
        </aside>
      </div>
    </div>
  </section>
</main>
</body>
</html>
```
FILE: styles.css
```css
* { box-sizing: border-box; }
body {
  margin: 0;
  overflow: hidden;
  font: 13px/18px "Noto Sans CJK KR", sans-serif;
  color: #000;
}
h1, h2, h3, p, ul { margin: 0; padding: 0; font-size: inherit; font-weight: normal; }
ul { list-style: none; }
a { color: inherit; text-decoration: none; }
button { margin: 0; padding: 0; border: 0; background: none; font: inherit; color: inherit; }
svg { display: block; flex: none; }
table { border-collapse: separate; border-spacing: 0; table-layout: fixed; }
td, th { padding: 0; font-weight: normal; text-align: left; white-space: nowrap; overflow: hidden; }
.en { font-family: "Open Sans", sans-serif; font-size: 12px; }
.i16 { width: 16px; height: 16px; }
.sprite { position: absolute; width: 0; height: 0; }

.desk {
  position: relative;
  height: 100vh;
  overflow: hidden;
  background: linear-gradient(180deg, #00429a 0, #0a55b0 150px, #1477cc 156px, #1a86dc 380px, #0a94cf 560px, #089cd0 100%);
}
.desk::after {
  content: "";
  position: absolute;
  inset: 0 0 0 auto;
  width: 3px;
  background: linear-gradient(180deg, #023f92 0, #1e6fc6 150px, #1b7ad8 400px, #0a2c50 410px, #0c3055 100%);
}
.desk-label { position: absolute; left: -4px; top: 207px; color: #fff; font-size: 12px; text-shadow: 1px 1px 1px #000; }

/* Explorer windows */
.win {
  position: absolute;
  display: flex;
  flex-direction: column;
  padding: 0 5px 5px;
  border: 1px solid #0b2147;
  border-radius: 7px 7px 6px 6px;
}
.win-a {
  left: 5px; top: 5px; width: 637px; height: 406px;
  background: linear-gradient(115deg, #4a74b4 0, #3568b4 90px, #1558ae 240px, #1a62b9 380px, #3d79c4 480px, #1a66bb 560px);
  box-shadow: inset 0 0 0 1px #7fa9dd;
}
.win-b {
  left: 555px; right: 0; top: 8px; height: 403px;
  background: linear-gradient(100deg, #2a6dbd 0, #1c62b6 200px, #1458ac 330px, #1f5dad 440px, #4875b2 560px, #3a74bb 640px);
  box-shadow: inset 0 0 0 1px #8db6e4, 0 0 6px 1px rgba(0, 0, 0, .55);
}
.haze {
  position: absolute;
  left: 1px; top: 1px; bottom: 1px;
  width: 88px;
  border-radius: 6px;
  background: linear-gradient(180deg, #6598d6 0, #78a9e2 28px, #c9e8fa 35px, #e6fbff 44px, #a9dcf8 56px, #d4f0fc 64px, #e9fbff 96px, #dff5fd 100%);
  -webkit-mask-image: linear-gradient(90deg, #000 74px, transparent);
  mask-image: linear-gradient(90deg, #000 74px, transparent);
}
.caption { position: relative; display: flex; justify-content: flex-end; height: 30px; }
.caps {
  display: flex;
  height: 19px;
  border: 1px solid #16305e;
  border-top: 0;
  border-radius: 0 0 5px 5px;
  box-shadow: 0 0 0 1px rgba(200, 222, 248, .6);
}
.caps button {
  display: flex;
  align-items: center;
  justify-content: center;
  width: 27px;
  border-right: 1px solid #29497c;
  box-shadow: inset 0 0 0 1px rgba(180, 205, 240, .4);
}
.caps .close { width: 47px; border-right: 0; border-radius: 0 0 4px 4px; }
.caps svg { width: 14px; height: 12px; }
.win-b .caption { z-index: 1; }

.navrow { position: relative; display: flex; align-items: center; height: 32px; padding: 0 1px 5px 4px; }
.travel { display: flex; align-items: center; width: 68px; gap: 2px; }
.travel button svg { width: 26px; height: 26px; }
.travel .recent-btn { padding-left: 2px; color: #2b7bc4; }
.travel .recent-btn svg { width: 9px; height: 5px; stroke: #0c2f63; overflow: visible; }
.travel .dim { color: #6f97cc; }
.address, .search {
  display: flex;
  align-items: center;
  height: 23px;
  border: 1px solid #35598c;
  background: linear-gradient(180deg, #b6cbe9, #c5d8ef);
  box-shadow: inset 0 0 0 1px #d5e4f7, 0 0 0 1px rgba(150, 190, 235, .55);
  color: #51565e;
}
.address { flex: 1; min-width: 0; padding-left: 2px; gap: 9px; white-space: nowrap; overflow: hidden; }
.address .tr { width: 5px; height: 8px; color: #000; }
.address .drop { margin-left: auto; color: #0a1060; }
.address .drop svg { width: 8px; height: 5px; }
.address .refresh { display: flex; align-self: stretch; align-items: center; width: 26px; padding-left: 4px; border-left: 1px solid #35598c; }
.address .refresh svg { width: 18px; height: 16px; }
.search { width: 242px; margin-left: 6px; padding: 0 5px 0 9px; }
.search input { flex: 1; min-width: 0; padding: 0; border: 0; outline: 0; background: none; font: italic 12px/18px "Noto Sans CJK KR", sans-serif; }
.search input::placeholder { color: #6b727c; opacity: 1; }
.search .lens { width: 14px; height: 14px; }

.client { position: relative; display: flex; flex: 1; flex-direction: column; min-height: 0; border: 1px solid #1d3557; background: #fcfcfc; }
.cmdbar {
  display: flex;
  flex: none;
  align-items: center;
  height: 31px;
  padding: 0 15px 0 18px;
  gap: 30px;
  border-bottom: 1px solid #a0afc3;
  background: linear-gradient(180deg, #fafdff 0, #e9f1fb 14px, #dce6f4 15px, #dde9f7 100%);
  color: #1e395b;
  white-space: nowrap;
}
.cmdbar button { display: flex; align-items: center; gap: 6px; }
.cmdbar .with-icon { gap: 5px; }
.cmdbar .td { width: 8px; height: 5px; }
.cmdbar .vw { width: 16px; height: 14px; }
.cmdbar .right { display: flex; align-items: center; gap: 21px; margin-left: auto; }
.cmdbar .right button:first-child { gap: 10px; }
.cmdbar .help {
  justify-content: center;
  width: 15px; height: 15px;
  border-radius: 50%;
  background: radial-gradient(#3c63d8, #14288c);
  box-shadow: 0 0 0 1px #9aa0ac, inset 0 0 0 1px #dfe5f5;
  color: #fff;
  font: bold 11px/15px "Open Sans", sans-serif;
}
.panes { display: flex; flex: 1; min-height: 0; }
.side { flex: none; width: 164px; padding: 8px 1px 0; overflow: hidden; }
.side.scrolled { padding-top: 0; }
.side ul + ul { margin-top: 21px; }
.side li { height: 21px; padding-left: 18px; border: 1px solid transparent; border-radius: 3px; }
.side li.sub { padding-left: 28px; }
.side li.on { border-color: #dadada; background: linear-gradient(180deg, #f9f9f9, #e6e6e6); }
.side a { display: flex; align-items: center; gap: 5px; height: 19px; white-space: nowrap; }

.vscroll { display: flex; flex: none; flex-direction: column; align-items: center; width: 16px; padding: 6px 0; background: #f0f0f0; overflow: hidden; }
.vscroll .au { width: 8px; height: 5px; color: #404040; }
.vscroll i, .hscroll i { position: relative; border: 1px solid #979797; border-radius: 2px; }
.vscroll i { flex: none; width: 15px; background: linear-gradient(90deg, #f5f5f5, #e6e6e8 50%, #cfcfd2 55%, #dadadd); }
.vscroll i::after, .hscroll i::after { content: ""; position: absolute; }
.vscroll i::after { left: 3px; top: calc(50% - 4px); width: 7px; height: 8px; background: repeating-linear-gradient(180deg, #606060 0 1px, #fff 1px 2px, transparent 2px 3px); }
.vscroll .au:last-child { margin-top: auto; }
.t-a i { height: 110px; margin-top: 7px; }
.t-b i { height: 97px; margin-top: 96px; }
.t-m i { height: 44px; margin-top: 106px; }
.hscroll { display: flex; flex: none; align-items: center; height: 17px; padding: 0 6px; background: #f0f0f0; }
.hscroll .al { width: 5px; height: 8px; color: #404040; }
.hscroll i { height: 15px; margin-left: 8px; background: linear-gradient(180deg, #f5f5f5, #e6e6e8 50%, #cfcfd2 55%, #dadadd); }
.hscroll i::after { top: 3px; left: calc(50% - 4px); width: 8px; height: 7px; background: repeating-linear-gradient(90deg, #606060 0 1px, #fff 1px 2px, transparent 2px 3px); }
.hscroll .al:last-child { margin-left: auto; }
.h-a i { width: 295px; }
.h-b i { width: 340px; }
.h-m i { flex: 1; margin-right: 14px; }

.files { display: flex; flex: 1; flex-direction: column; min-width: 0; margin-left: 1px; border-left: 1px solid #d9e5f3; }
.files-view { flex: 1; min-height: 0; padding-left: 15px; overflow: hidden; }
.files table { width: 377px; }
.files .wide { width: 470px; }
.c-name { width: 257px; }
.c-date { width: 120px; }
.files th { position: relative; height: 30px; padding: 0 0 5px 6px; border-left: 1px solid #e2ebf6; color: #4c607a; }
.files th:first-child { padding-left: 4px; border-left: 0; }
.sort { position: absolute; left: 124px; top: 1px; width: 7px; height: 4px; color: #5d8aa8; }
.files td { height: 21px; padding-left: 7px; color: #6d6d6d; line-height: 19px; }
.files td:first-child { padding-left: 5px; color: #000; }
.files td svg { display: inline-block; margin-right: 3px; vertical-align: middle; }
.picked td { border: solid #d9d9d9; border-width: 1px 0 0; background: linear-gradient(180deg, #f9f9f9, #e6e6e6); }
.picked td:first-child { padding-left: 4px; border-left-width: 1px; border-top-left-radius: 3px; }
.picked tr:last-child td { border-bottom-width: 1px; }

.details { display: flex; flex: none; height: 47px; padding: 3px 0 0 20px; border-top: 1px solid #c9d8ea; background: #f1f5fb; color: #1e395b; white-space: nowrap; overflow: hidden; }
.details > span { padding-top: 3px; }
.details .big { width: 36px; height: 38px; margin-right: 23px; }
.details > .count { padding-top: 1px; font-size: 14px; }
.details .lab { margin: 0 6px 0 8px; color: #5a6f8c; }
.items { height: 51px; }
.items > .count { padding-top: 2px; font-size: 13px; }
.usbbig { width: 44px; height: 26px; margin: 19px 16px 0 -1px; }

/* Copy dialog */
.dialog {
  position: absolute;
  left: 739px; top: 261px; width: 415px; height: 150px;
  padding: 0 6px;
  border: 1px solid #4d5a66;
  border-radius: 7px 7px 0 0;
  background: #f9fefe;
  box-shadow: inset 0 0 0 1px #fff, 0 0 6px 1px rgba(0, 0, 0, .45);
}
.dialog header { display: flex; height: 27px; }
.dialog header .i16 { margin: 4px 5px 0 1px; }
.dialog h2 { padding-top: 3px; }
.caps.pale { margin-left: auto; border-color: #9aa5ad; }
.pale button { border-color: #b5bdc3; }
.pale .off { opacity: .45; }
.dialog-body { border: 1px solid #7b878f; border-bottom: 0; height: 122px; background: #fff; }
.banner {
  display: flex;
  align-items: center;
  justify-content: space-between;
  height: 40px;
  padding-left: 21px;
  background: linear-gradient(90deg, #dbe6f5 0, #bcd2ec 30%, #95b8de 55%, #6f97c0 66%, #3a668f 80%, #2b5688 88%, #0a2c58 98%);
  font-size: 17px;
  white-space: nowrap;
}
.banner svg { width: 80px; height: 40px; }
.info { padding: 10px 22px 0 21px; line-height: 15px; white-space: nowrap; }
.info b, .rb { font-family: Roboto, sans-serif; font-size: 12px; }
.won { font-size: 12px; }
.bar { height: 16px; margin-top: 10px; border: 1px solid #a4a4a4; border-radius: 2px; background: linear-gradient(180deg, #f2f2f2, #d2d2d2 45%, #bdbdbd 50%, #d0d0d0); }
.bar i { display: block; height: 14px; background: linear-gradient(180deg, #b8f0c0, #17c42d 45%, #06b01f); }

/* Computer management */
.mgmt {
  position: absolute;
  left: 6px; right: 2px; top: 398px; bottom: 0;
  display: flex;
  flex-direction: column;
  padding: 0 5px 0 6px;
  border: 1px solid #10263c;
  border-bottom: 0;
  border-radius: 7px 7px 0 0;
  background: linear-gradient(180deg, #b8dbf7 0, #9cc6ec 60px, #82b4e0 148px, #2180c3 152px, #2186c8 100%);
  box-shadow: inset 0 0 0 1px #e3f3ff, 0 0 7px 2px rgba(0, 0, 0, .6);
  z-index: 1;
}
.reflect {
  position: absolute;
  left: 1px; right: 1px; top: 1px;
  height: 27px;
  border-radius: 6px 6px 0 0;
  background:
    radial-gradient(34px 14px at 650px 24px, rgba(190, 110, 110, .85), transparent),
    radial-gradient(70px 12px at 690px 26px, rgba(180, 220, 190, .9), transparent),
    linear-gradient(90deg, transparent 722px, #b1d4f6 740px, #b9dbfa 1090px, #7fa7cc 1150px),
    linear-gradient(180deg, #b4d7f8 0, #a5cef4 8px, #7db6df 14px, #4998c2 20px, #5aa5cd 27px);
}
.mgmt header { position: relative; display: flex; flex: none; height: 28px; }
.mgmt header .i16 { margin: 5px 5px 0 1px; }
.mgmt h1 { padding-top: 4px; text-shadow: 0 0 6px #fff, 0 0 8px #fff, 0 0 10px #fff; }
.caps.glass { margin-left: auto; background: linear-gradient(180deg, #cfe2f4, #a9c8e4 45%, #8fb2d4 50%, #a9cbe8); }
.caps .red { background: linear-gradient(180deg, #e0a095, #c95a48 45%, #b02c14 50%, #d4603e); }
.mclient { position: relative; display: flex; flex: 1; flex-direction: column; min-height: 0; border: solid #2d4868; border-width: 1px 1px 0; background: #f0f0f0; }
.menubar { display: flex; flex: none; height: 22px; padding: 0 10px 2px; gap: 16px; border-bottom: 1px solid #b3b6c4; background: linear-gradient(180deg, #fff 0, #e8ecf6 9px, #d4daec 10px, #d7dcef 100%); }
.tools { display: flex; flex: none; align-items: center; height: 24px; padding-left: 1px; border-bottom: 1px solid #b9bdd4; background: linear-gradient(180deg, #f6f7fc 0, #d6dbee 2px, #e2e7f6 100%); }
.tools button { display: flex; align-items: center; justify-content: center; width: 23px; height: 21px; border: 1px solid transparent; border-radius: 3px; }
.tools svg { width: 16px; height: 16px; }
.tools .down { border-color: #6d7079; background: #dcdde2; box-shadow: inset 0 0 2px #555; }
.tools .sep { width: 1px; height: 18px; margin: 0 4px 0 3px; background: #83869a; }
.body { display: flex; flex: 1; min-height: 0; padding-top: 5px; }
.tree { flex: none; width: 177px; padding-top: 1px; border: solid #828790; border-width: 1px 1px 0 0; background: #fff; overflow: hidden; }
.tree li { display: flex; align-items: center; height: 18px; white-space: nowrap; }
.tree a { margin-left: 5px; }
.tree .root { padding-left: 5px; }
.tree .l1 { padding-left: 10px; }
.tree .l2 { padding-left: 29px; }
.tree .tg { width: 8px; height: 9px; margin-right: 6px; }
.tree .cur { display: flex; align-items: center; height: 18px; padding-right: 3px; border-radius: 2px; background: #f0f0f0; box-shadow: 0 0 0 1px #d9d9d9; }

.center { display: flex; flex: 1; flex-direction: column; min-width: 0; margin: 0 4px; }
.volumes { display: flex; flex: none; flex-direction: column; height: 181px; border: solid #696969; border-width: 2px 0 0 1px; background: #fff; overflow: hidden; }
.volumes table { width: 892px; }
.v1 { width: 118px; } .v2 { width: 64px; } .v3 { width: 40px; } .v4 { width: 80px; } .v5 { width: 207px; }
.v6 { width: 75px; } .v7 { width: 77px; } .v8 { width: 100px; } .v9 { width: 64px; } .v10 { width: 67px; }
.volumes th { height: 19px; padding-left: 10px; border: solid #888; border-width: 0 1px 1px 0; background: #f0f0f0; box-shadow: inset 1px 1px 0 #fff, inset -1px -1px 0 #bdbdbd; line-height: 17px; }
.volumes th:first-child { padding-left: 6px; }
.volumes td { height: 17px; padding-left: 6px; line-height: 17px; }
.volumes td:first-child { display: flex; align-items: center; padding-left: 2px; overflow: visible; font-size: 12px; }
.volumes td:first-child span { padding: 0 2px; font-family: "Open Sans", sans-serif; }
.volumes .sel td:first-child span { padding-right: 5px; background: #3399ff; color: #fff; }
.teal { filter: sepia(1) hue-rotate(130deg) saturate(3); }
.h-m { margin-top: auto; }
.split { flex: none; height: 8px; border-bottom: 2px solid #696969; background: #f0f0f0; box-shadow: inset 0 2px 0 #f0f0f0, inset 0 3px 0 #fff; }
.disks { display: flex; flex: 1; min-height: 0; border-left: 1px solid #696969; }
.disk-list { flex: 1; min-width: 0; overflow: hidden; }
.disk { display: flex; height: 104px; padding-top: 6px; border-bottom: 1px solid #a0a0a0; }
.disk-head { flex: none; width: 115px; padding: 5px 9px; border-right: 1px solid #a0a0a0; box-shadow: inset 0 1px 0 #fff; line-height: 15px; }
.disk-head h3 { display: flex; align-items: center; gap: 8px; font-weight: bold; }
.disk.last { height: 60px; padding-top: 1px; border-bottom: 0; }
.disk.last .parts { box-shadow: inset 0 1px 0 #fff; }
.disk-head h3:not(.en) { font-size: 12px; }
.parts { flex: 1; min-width: 0; }
.part-box { width: 537px; max-width: 100%; height: 97px; padding: 5px 4px 4px 1px; border: solid #a0a0a0; border-width: 0 1px 1px 0; box-shadow: inset -1px -1px 0 #fff, inset 0 1px 0 #fff; }
.stripe { height: 14px; border-bottom: 1px solid #c8c8c8; background: #000084; }
.part { height: 73px; padding: 2px 4px; border: 3px solid #bcbcbc; outline: 1px solid #969696; outline-offset: -3px; background: repeating-linear-gradient(135deg, #fff 0 5px, #9a9a9a 5px 6px); line-height: 15px; }
.part p { width: max-content; background: #fff; }

.actions { flex: none; width: 101px; border: solid #696969; border-width: 2px 0 0 2px; background: #fff; }
.actions h2 { height: 21px; padding-left: 5px; border-bottom: 1px solid #a0a0a0; background: #f0f0f0; font-weight: bold; font-size: 13px; line-height: 20px; }
.actions button { display: flex; align-items: center; width: 100%; }
.actions .group { height: 25px; margin-top: 1px; padding: 0 9px 0 8px; justify-content: space-between; background: linear-gradient(180deg, #b3cbe8, #9ab4d2); }
.actions .more { height: 22px; padding: 0 10px 0 32px; justify-content: space-between; }
.actions .up { width: 9px; height: 5px; }
.actions .rt { width: 5px; height: 9px; }
```
